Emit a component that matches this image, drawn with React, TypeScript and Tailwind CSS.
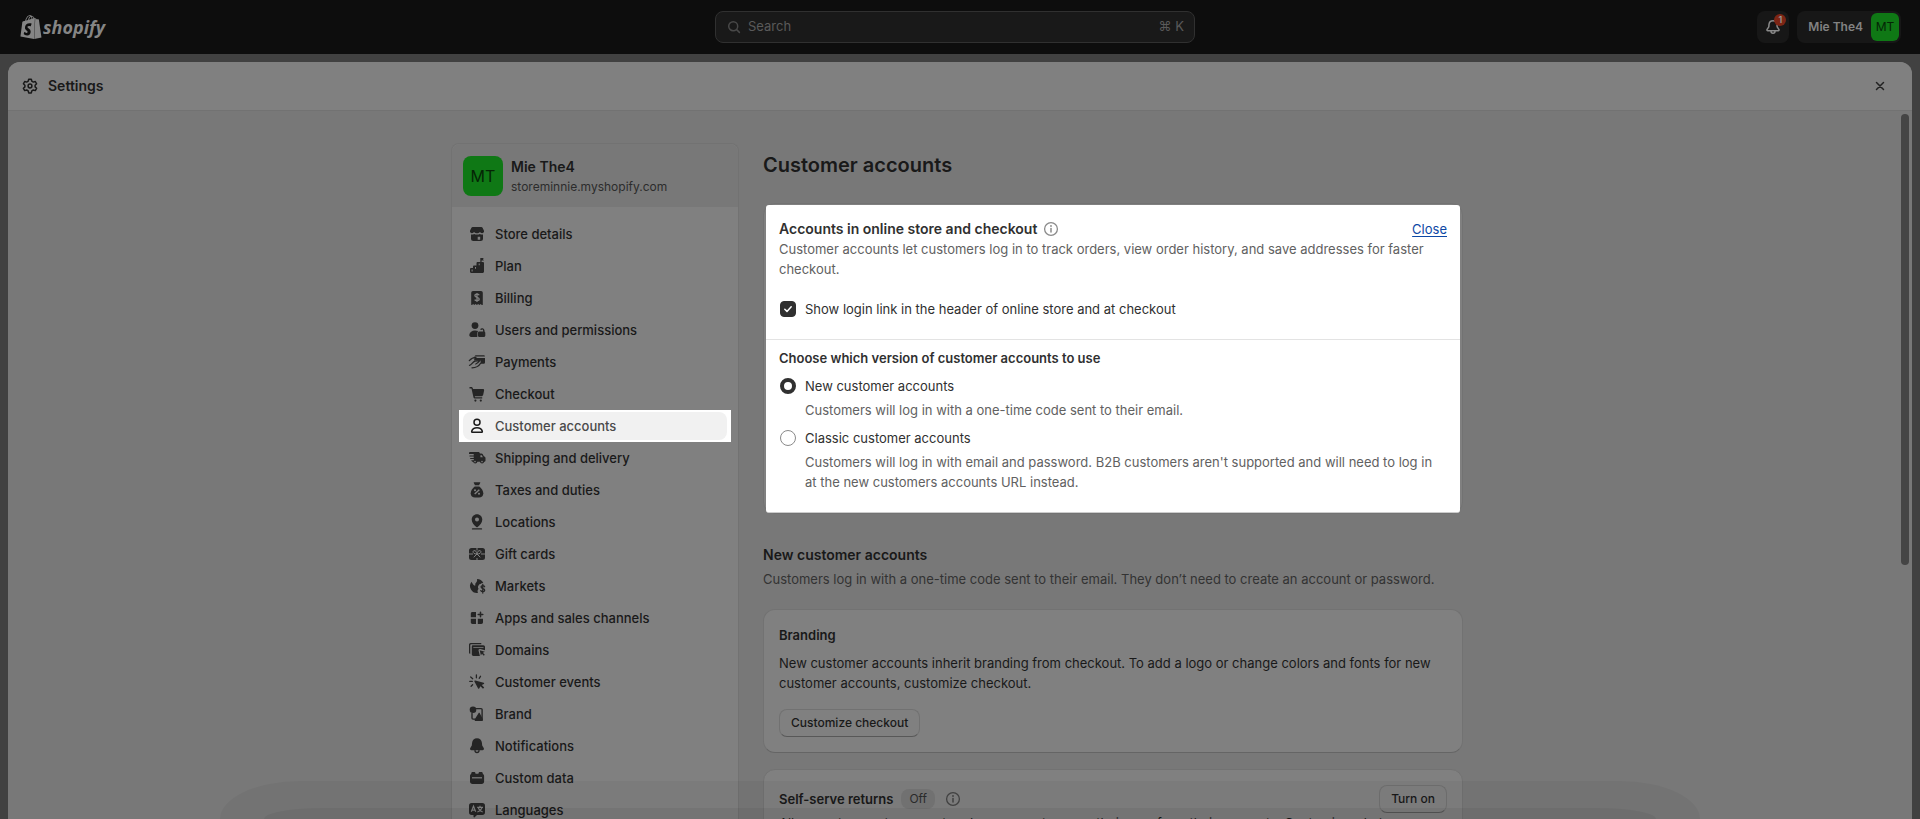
import React from "react";
import { SiShopify } from "react-icons/si";

type IconProps = { children: React.ReactNode; className?: string };

function Icon({ children, className = "size-5 shrink-0" }: IconProps) {
  return (
    <svg viewBox="0 0 20 20" className={className} fill="currentColor" fillRule="evenodd" aria-hidden="true">
      {children}
    </svg>
  );
}

const line = {
  fill: "none",
  stroke: "currentColor",
  strokeWidth: 1.5,
  strokeLinecap: "round" as const,
  strokeLinejoin: "round" as const,
};

const icons = {
  store: (
    <Icon>
      <path d="M5.8 3h8.400c.7 0 1.200.3 1.500.9l1.200 2.600c.6 1.400-.4 2.700-1.900 2.700-.9 0-1.600-.4-2.100-1.100-.4.700-1.100 1.100-2 1.100h-1.800c-.9 0-1.600-.4-2-1.100-.5.700-1.200 1.100-2.100 1.100-1.500 0-2.500-1.300-1.900-2.700l1.200-2.600C4.600 3.300 5.100 3 5.800 3Z" />
      <path d="M4 10.500c1.200.3 2.200 0 3.100-.6.800.5 1.800.7 2.900.7s2.100-.2 2.900-.7c.9.6 1.900.9 3.100.6v4A2.500 2.500 0 0 1 13.500 17h-7A2.500 2.500 0 0 1 4 14.500v-4Zm6.700 2.300v3h2.500v-3h-2.500Z" />
    </Icon>
  ),
  plan: (
    <Icon>
      <path d="M13.300 1.900h3.600l-1 1.200 1 1.300h-2.300V6h1.200c.7 0 1.200.5 1.200 1.200v8.300c0 .8-.7 1.500-1.500 1.500H4.200C3.500 17 3 16.500 3 15.800v-2.600c0-.7.500-1.200 1.200-1.200H6v-1.300c0-.7.500-1.200 1.200-1.200H9.500V7.200c0-.7.5-1.200 1.200-1.200h2.600V1.900ZM4.600 13.500v2h1v-2h-1Zm3.400-2.600v1.800h1v-1.800H8Zm3.700-3.500v1.900h1V7.400h-1Z" />
    </Icon>
  ),
  billing: (
    <Icon>
      <path d="M6 3h8a1.800 1.800 0 0 1 1.800 1.800v11.700c0 .5-.6.700-1 .4l-1.100-1-1.300 1.100-1.300-1.100L9.900 17l-1.300-1.100L7.300 17l-1.200-1.100-1 1c-.3.300-.9.100-.9-.4V4.800A1.800 1.800 0 0 1 6 3Z" />
      <path d="M12.200 7.200c-.4-.7-1.200-1-2.200-1-1.200 0-2.100.6-2.100 1.600 0 2.200 4.300 1.100 4.300 3.300 0 1-.9 1.600-2.200 1.600-1.100 0-1.900-.4-2.300-1.100M10 5v9" fill="none" stroke="#808080" strokeWidth="1.300" />
    </Icon>
  ),
  users: (
    <Icon>
      <circle cx="8" cy="5.600" r="3.400" />
      <path d="M2.300 14.800C2.700 12 5 10.400 8 10.400c1.200 0 2.300.2 3.200.7-.6.600-.9 1.300-.9 2.100V17H4.200c-1.200 0-2.100-1-1.900-2.200Z" />
      <path d="M12.400 11.500h3.700V10.400a.9.9 0 0 0-1.700-.3l-1.300-.5a2.300 2.300 0 0 1 4.400.8v1.200c.5.300.8.8.8 1.400v2.500c0 .8-.7 1.500-1.500 1.500h-4.400c-.8 0-1.500-.7-1.500-1.500V13c0-.8.700-1.500 1.500-1.500Z" />
    </Icon>
  ),
  payments: (
    <Icon>
      <path d="M8.600 3.300h8c.8 0 1.300.4 1.300 1.100H7.100l1.500-1.100Z" />
      <path d="M7.500 5.900H18v4.300c0 .9-.7 1.600-1.600 1.600h-2.600l-.3-3.200H7l.5-2.700Z" />
      <path d="M2.300 8.600C4.300 6.200 6 5.400 9 5.300M2.500 13.300c2-.1 3-3.300 5.500-4.200 1.500-.4 3.300-.5 4.800-.5-1.600 2-2.300 2.800-4 3.400M5 15.800c3.800 0 6.600-1 8.600-4.500" {...line} strokeWidth={1.300} />
    </Icon>
  ),
  checkout: (
    <Icon>
      <path d="M2.500 3.100h1.700c.9 0 1.500.6 1.700 1.400l.1.500h10c.8 0 1.300.7 1.100 1.400l-.9 4.300c-.2.900-.9 1.500-1.800 1.500H7.800l.2 1h7.200v1.400H7.700c-.6 0-1-.4-1.200-1L4.600 4.900c0-.3-.2-.4-.5-.4H2.500V3.100Z" />
      <circle cx="8.400" cy="16.600" r="1.100" />
      <circle cx="13.800" cy="16.600" r="1.100" />
    </Icon>
  ),
  person: (
    <Icon>
      <g {...line}>
        <circle cx="10" cy="6.200" r="3" />
        <path d="M4.700 15.300c.6-2.200 2.700-3.600 5.300-3.600s4.700 1.400 5.300 3.600c.1.500-.2.900-.7.900H5.400c-.5 0-.8-.4-.7-.9Z" />
      </g>
    </Icon>
  ),
  shipping: (
    <Icon>
      <path d="M4.500 4h6.800c.9 0 1.600.7 1.600 1.500h1.500c.6 0 1.100.3 1.400.8l.9 1.700 1 .7c.5.300.8.8.8 1.400v2.400c0 .8-.6 1.300-1.300 1.300a2.200 2.200 0 0 1-4.300 0h-2.500a2.200 2.200 0 0 1-4.300 0c-1.100 0-1.800-.7-1.800-1.500h2.500v-1.200H3.200V9.900h3.500V8.600H2.500V7.400h4.200V6.100H2V5.200C2 4.500 2.500 4 3.200 4h1.300Zm8.900 3.200v2h2.400l-.8-1.600c-.1-.2-.4-.4-.6-.4h-1Z" />
      <circle cx="8" cy="13.600" r=".8" fill="#808080" />
      <circle cx="15" cy="13.600" r=".8" fill="#808080" />
    </Icon>
  ),
  taxes: (
    <Icon>
      <path d="M7.300 2.200h5.400c.5 0 .8.500.5.900L12 5.300H8L6.800 3.100c-.3-.4 0-.9.500-.9Z" />
      <path d="M7.700 6.400h4.600c2.200 1.600 4 4.300 4 6.900 0 2.900-1.900 4.200-4.300 4.200H8c-2.400 0-4.300-1.300-4.300-4.200 0-2.600 1.800-5.300 4-6.900Z" />
      <path d="m7.700 14.100 4.600-4.400" stroke="#808080" strokeWidth="1.400" />
      <circle cx="8" cy="10.200" r="1" fill="#808080" />
      <circle cx="12" cy="13.700" r="1" fill="#808080" />
    </Icon>
  ),
  locations: (
    <Icon>
      <path d="M10 2.200c3 0 5.300 2.300 5.300 5.200 0 3.300-2.300 5.800-4.600 7.500-.4.300-1 .3-1.400 0C7 13.200 4.700 10.700 4.700 7.400 4.700 4.500 7 2.200 10 2.200Zm0 3.300a2 2 0 1 0 0 4 2 2 0 0 0 0-4Z" />
      <path d="M5.500 16.900h9" {...line} strokeWidth={1.300} />
    </Icon>
  ),
  gift: (
    <Icon>
      <path d="M4.500 4h11A2.500 2.500 0 0 1 18 6.500v7a2.500 2.500 0 0 1-2.500 2.500h-11A2.500 2.500 0 0 1 2 13.500v-7A2.500 2.500 0 0 1 4.500 4Z" />
      <g fill="none" stroke="#808080" strokeWidth="1">
        <path d="M2 10h4M14 10h4M10 4v2.500M10 14v2M10 10l-3.300 3.300M10 10l3.300 3.300" />
        <path d="M10 10C6.500 10.300 5 7.500 6.800 6.700 8.400 6.100 9.700 7.700 10 10ZM10 10c3.500.3 5-2.500 3.200-3.300C11.600 6.100 10.300 7.700 10 10Z" />
      </g>
    </Icon>
  ),
  markets: (
    <Icon>
      <path d="M10 3a7 7 0 0 1 6.300 4c-1.200-.1-2.100.3-2.800 1.100-.8 0-1.300.5-1.800 1.100-.8 1-1 2.300-.3 3.400.3.500-.4 1-.7 1.600-.3.700-.1 1.700.3 2.700A7 7 0 0 1 4.500 5.700L6 8.300c.3.600 1 .9 1.500 1.300.5.300.9-.3.800-.9-.2-1 .2-1.700.9-2.300.8-.7 1.100-2.100.8-3.400Z" />
      <path d="M17.600 10.700c-.4-.7-1-1-1.800-1-1 0-1.700.6-1.700 1.400 0 2.100 3.600 1 3.600 3.100 0 .9-.8 1.500-1.900 1.500-.9 0-1.600-.4-2-1.100M15.800 8.500v8.500" {...line} strokeWidth={1.300} />
    </Icon>
  ),
  apps: (
    <Icon>
      <path d="M5.500 4H9v5.200H3.800V5.700C3.800 4.700 4.500 4 5.500 4ZM3.800 10.800H9V16H5.500c-1 0-1.700-.7-1.700-1.700v-3.500ZM10.800 10.800H16v3.500c0 1-.7 1.700-1.700 1.700h-3.500v-5.200Z" />
      <path d="M13.500 4.200v4.600M11.200 6.500h4.600" {...line} />
    </Icon>
  ),
  domains: (
    <Icon>
      <path d="M2 4.700C2 3.800 2.700 3 3.700 3h10.600v1.300H4c-.4 0-.7.3-.7.7v8.700C2.500 13.700 2 13.100 2 12.400V4.700Z" />
      <path d="M6 5.300h10.300c1 0 1.700.7 1.700 1.700v3.300l-4.900-1.200c-1-.2-1.800.6-1.500 1.600l1.300 5.300H6.500c-1 0-1.700-.7-1.700-1.700V6.500c0-.7.500-1.200 1.200-1.200Zm.3 1.900v.9h10.200v-.9H6.300Z" />
      <path d="m12.700 10.300 5.200 1.500-2 1 1.900 2-1 1-1.900-2-1 1.700-1.200-5.200Z" />
    </Icon>
  ),
  events: (
    <Icon>
      <path d="m8.300 8.500 8.400 2.300c.6.200.7.900.1 1.200l-2 1 2.400 2.600-1.200 1.200-2.500-2.500-1.300 2.100c-.3.500-1 .4-1.200-.2L7.400 9.400c-.2-.5.300-1 .9-.9Z" />
      <path d="M9.400 3v2.800M13.500 4.300l-1.300 2M3.700 5l2 1.700M2.800 9.400h2.500M5.600 12.700l-1.500 1.500" {...line} strokeWidth={1.300} />
    </Icon>
  ),
  brand: (
    <Icon>
      <circle cx="6" cy="5.700" r="3.300" />
      <path d="M9.500 4.600h4.600c.6 0 1 .4 1 1v9.200M5 9.500v4.600c0 .6.400 1 1 1h2" {...line} strokeWidth={1.400} />
      <path d="M11.500 9.200c.3-.5 1-.5 1.300 0l3.100 6c.4.800-.1 1.800-1 1.800H8.800c-1 0-1.500-1-1-1.800l3.700-6Z" />
    </Icon>
  ),
  notifications: (
    <Icon>
      <path d="M10 2.200c2.800 0 4.700 2 4.900 4.600l.3 2.800 1.500 2.400c.7 1.100 0 2.300-1.200 2.300h-11c-1.200 0-1.900-1.200-1.200-2.300l1.500-2.400.3-2.800C5.300 4.200 7.200 2.200 10 2.200Z" />
      <path d="M8 14.500c0 1.200.8 2 2 2s2-.8 2-2" {...line} strokeWidth={1.300} />
    </Icon>
  ),
  data: (
    <Icon>
      <path d="M5.600 4h1.500c.8 0 1.400.6 1.400 1.400v.3h3v-.3c0-.8.600-1.400 1.400-1.400h1.500c.8 0 1.400.6 1.400 1.400v.6c.8.300 1.300 1 1.300 2v5.500c0 1.500-1 2.500-2.500 2.500h-9C4 16 3 15 3 13.500V8c0-1 .4-1.700 1.200-2v-.6C4.200 4.600 4.800 4 5.600 4Z" />
      <path d="M5 9.800h10" stroke="#808080" strokeWidth="1.200" />
    </Icon>
  ),
  languages: (
    <Icon>
      <path d="M4.700 3h10.600A2.700 2.700 0 0 1 18 5.700v6.600a2.700 2.700 0 0 1-2.700 2.700H10l-2.400 2.200c-.4.400-1.100.1-1.100-.5V15H4.700A2.700 2.700 0 0 1 2 12.300V5.700A2.700 2.700 0 0 1 4.700 3Z" />
      <path d="m4.300 11.800 2.200-5.600 2.200 5.600M5 10.100h3M10.200 7.400h5.800M13 5.800v1.600M11.300 8c.7 2 2.200 3.300 4.400 4M14.900 8c-.7 2-2.200 3.300-4.500 4" fill="none" stroke="#808080" strokeWidth="1.200" />
    </Icon>
  ),
};

const navItems: { label: string; icon: keyof typeof icons; active?: boolean }[] = [
  { label: "Store details", icon: "store" },
  { label: "Plan", icon: "plan" },
  { label: "Billing", icon: "billing" },
  { label: "Users and permissions", icon: "users" },
  { label: "Payments", icon: "payments" },
  { label: "Checkout", icon: "checkout" },
  { label: "Customer accounts", icon: "person", active: true },
  { label: "Shipping and delivery", icon: "shipping" },
  { label: "Taxes and duties", icon: "taxes" },
  { label: "Locations", icon: "locations" },
  { label: "Gift cards", icon: "gift" },
  { label: "Markets", icon: "markets" },
  { label: "Apps and sales channels", icon: "apps" },
  { label: "Domains", icon: "domains" },
  { label: "Customer events", icon: "events" },
  { label: "Brand", icon: "brand" },
  { label: "Notifications", icon: "notifications" },
  { label: "Custom data", icon: "data" },
  { label: "Languages", icon: "languages" },
];

function InfoIcon() {
  return (
    <Icon>
      <circle cx="10" cy="10" r="6.400" fill="none" stroke="currentColor" strokeWidth="1.300" />
      <path d="M10 9.500V13" {...line} />
      <circle cx="10" cy="7" r=".9" />
    </Icon>
  );
}

function TopBar() {
  return (
    <header className="grid h-[54px] shrink-0 grid-cols-[1fr_480px_1fr] items-center bg-[#0d0d0d] pr-[19px] pl-[9px]">
      <a href="#home" className="flex items-center pl-[10px] text-[#858585]">
        <SiShopify className="size-6" aria-hidden="true" />
        <span className="font-['Open_Sans',sans-serif] text-[18px] leading-6 font-bold italic">shopify</span>
      </a>
      <div className="flex h-8 items-center gap-1 rounded-lg border border-[#303030] bg-[#191919] pr-2.5 pl-2 text-[#5a5a5a]">
        <Icon className="size-5 shrink-0 text-[#484848]">
          <circle cx="9.200" cy="9.200" r="4.500" {...line} />
          <path d="m12.600 12.600 2.800 2.800" {...line} />
        </Icon>
        <input
          type="text"
          aria-label="Search"
          placeholder="Search"
          className="min-w-0 flex-1 bg-transparent text-[13px] outline-none placeholder:text-[#5a5a5a]"
        />
        <kbd className="font-['Inter','DejaVu_Sans',sans-serif] text-[13px]">⌘ K</kbd>
      </div>
      <div className="flex items-center justify-end gap-2">
        <button type="button" aria-label="Notifications" className="relative flex size-8 items-center justify-center rounded-lg bg-[#171717] text-[#8a8a8a]">
          <Icon>
            <path d="M10 3.700c2.200 0 3.800 1.600 4 3.700l.2 2.500 1.700 2.500c.4.600 0 1.300-.7 1.300H4.800c-.7 0-1.100-.7-.7-1.300l1.700-2.500.2-2.500c.2-2.100 1.800-3.700 4-3.700Z" {...line} />
            <path d="M8 14.200c0 1.200.8 2 2 2s2-.8 2-2" {...line} />
          </Icon>
          <span className="absolute top-[3px] right-[3px] flex size-3 items-center justify-center rounded-full bg-[#7d2514] text-[9px] font-semibold text-[#999999]">1</span>
        </button>
        <button type="button" className="flex h-8 items-center gap-2 rounded-lg bg-[#171717] pr-0.5 pl-[11px] text-[12px] font-semibold text-[#828282]">
          Mie The4
          <span className="flex size-7 items-center justify-center rounded-md bg-[#0f7815] font-normal text-[#052505]">MT</span>
        </button>
      </div>
    </header>
  );
}

function Sidebar() {
  return (
    <aside className="w-72 shrink-0 rounded-t-lg border border-b-0 border-[#727272] bg-[#808080]">
      <div className="flex h-[63px] items-center gap-2 rounded-t-lg bg-[#787878] px-[11px]">
        <span className="flex size-10 shrink-0 items-center justify-center rounded-lg bg-[#0f7815] text-[16px] text-[#052505]">MT</span>
        <div className="min-w-0 pt-0.5">
          <p className="text-[14px] leading-5 font-semibold">Mie The4</p>
          <p className="text-[12px] leading-5 text-[#2c2c2c]">storeminnie.myshopify.com</p>
        </div>
      </div>
      <nav aria-label="Settings sections">
        <ul className="px-[7px] py-[11px]">
          {navItems.map((item) => (
            <li key={item.label} className={item.active ? "bg-white px-1 py-0.5" : "px-1 py-0.5"}>
              <a
                href={"#" + item.icon}
                aria-current={item.active ? "page" : undefined}
                className={
                  item.active
                    ? "flex items-center gap-2 rounded-lg bg-[#f1f1f1] p-1 text-[13px] leading-5 font-medium text-[#4a4a4a]"
                    : "flex items-center gap-2 rounded-lg p-1 text-[13px] leading-5 font-medium text-[#191919]"
                }
              >
                <span className={item.active ? "text-[#1a1a1a]" : "text-[#252525]"}>{icons[item.icon]}</span>
                {item.label}
              </a>
            </li>
          ))}
        </ul>
      </nav>
    </aside>
  );
}

function VersionOption({ id, label, hint, checked }: { id: string; label: string; hint: string; checked?: boolean }) {
  return (
    <div className="grid grid-cols-[18px_1fr] gap-x-2 gap-y-1">
      <input
        type="radio"
        name="accounts-version"
        id={id}
        defaultChecked={checked}
        aria-describedby={id + "-hint"}
        className="mt-0.5 ml-px size-4 appearance-none rounded-full border border-[#8a8a8a] bg-white checked:border-4 checked:border-[#303030]"
      />
      <label htmlFor={id} className="text-[#303030]">{label}</label>
      <p id={id + "-hint"} className="col-start-2 text-[#616161]">{hint}</p>
    </div>
  );
}

function AccountsCard() {
  return (
    <section className="mt-[26px] rounded-xl border border-[#727272] bg-[#808080] p-0.5 pt-px pb-0">
      <div className="rounded-[3px] border-b border-[#cccccc] bg-white">
        <div className="border-b border-[#e3e3e3] px-[13px] pt-3.5 pb-5">
          <div className="flex items-center justify-between">
            <h2 className="flex items-center gap-1 text-[14px] leading-5 font-semibold text-[#303030]">
              Accounts in online store and checkout
              <span className="text-[#8a8a8a]"><InfoIcon /></span>
            </h2>
            <button type="button" className="text-[#0d48a5] underline underline-offset-2">Close</button>
          </div>
          <p className="text-[#616161]">
            Customer accounts let customers log in to track orders, view order history, and save addresses for faster checkout.
          </p>
          <div className="mt-5 flex items-center gap-2">
            <span className="grid w-[18px] place-items-center">
              <input
                type="checkbox"
                id="show-login"
                defaultChecked
                className="peer col-start-1 row-start-1 size-4 appearance-none rounded-sm border border-[#8a8a8a] checked:border-[#303030] checked:bg-[#303030]"
              />
              <svg viewBox="0 0 16 16" aria-hidden="true" className="pointer-events-none col-start-1 row-start-1 hidden size-4 text-white peer-checked:block">
                <path d="m4.800 8.300 2.200 2.100 4.200-4.700" {...line} />
              </svg>
            </span>
            <label htmlFor="show-login" className="text-[#303030]">Show login link in the header of online store and at checkout</label>
          </div>
        </div>
        <fieldset className="px-[13px] pt-2 pb-5">
          <legend className="float-left mb-2 w-full font-semibold text-[#303030]">Choose which version of customer accounts to use</legend>
          <div className="clear-both flex flex-col gap-2">
            <VersionOption id="version-new" label="New customer accounts" hint="Customers will log in with a one-time code sent to their email." checked />
            <VersionOption
              id="version-classic"
              label="Classic customer accounts"
              hint="Customers will log in with email and password. B2B customers aren't supported and will need to log in at the new customers accounts URL instead."
            />
          </div>
        </fieldset>
      </div>
    </section>
  );
}

function Main() {
  return (
    <main className="w-[700px] min-w-0 text-[13px] leading-5">
      <h1 className="mt-2.5 text-[20px] leading-6 font-semibold">Customer accounts</h1>
      <AccountsCard />
      <h2 className="mt-[31px] text-[14px] leading-5 font-semibold">New customer accounts</h2>
      <p className="mt-1 text-[#333333]">
        Customers log in with a one-time code sent to their email. They don’t need to create an account or password.
      </p>
      <section className="mt-5 rounded-xl border border-[#727272] border-b-[#656565] bg-[#808080] p-[15px]">
        <h3 className="font-semibold">Branding</h3>
        <p className="mt-2">
          New customer accounts inherit branding from checkout. To add a logo or change colors and fonts for new customer accounts, customize checkout.
        </p>
        <button type="button" className="mt-4 flex h-7 items-center rounded-lg border border-[#717171] border-b-[#585858] px-[11px] text-[12px] font-medium">
          Customize checkout
        </button>
      </section>
      <section className="mt-4 rounded-xl border border-[#727272] bg-[#808080] p-[15px]">
        <div className="flex h-7 items-center">
          <h3 className="font-semibold">Self-serve returns</h3>
          <span className="ml-2 rounded-lg bg-[#767676] px-2 text-[12px] text-[#2c2c2c]">Off</span>
          <span className="ml-2 text-[#444444]"><InfoIcon /></span>
          <button type="button" className="ml-auto flex h-7 items-center rounded-lg border border-[#717171] border-b-[#585858] px-[11px] text-[12px] font-medium">
            Turn on
          </button>
        </div>
        <p>Allow customers to request and manage returns on their own from their accounts. Customize what</p>
      </section>
    </main>
  );
}

export default function App() {
  return (
    <div className="relative flex h-screen flex-col overflow-hidden bg-[#414141] font-['Inter',sans-serif] text-[#191919]">
      <TopBar />
      <div className="mx-2 mt-2 flex min-h-0 flex-1 flex-col overflow-hidden rounded-t-xl bg-[#787878]">
        <div className="flex h-[49px] shrink-0 items-center gap-2 border-b border-[#727272] bg-[#808080] pr-[22px] pl-3">
          <Icon>
            <path d="M8.700 3.200h2.600l.5 2 1.500.9 2-.6 1.300 2.300-1.500 1.400v1.700l1.500 1.400-1.300 2.300-2-.6-1.500.9-.5 2H8.700l-.5-2-1.500-.9-2 .6-1.300-2.300 1.500-1.400V9.200L3.400 7.800l1.300-2.300 2 .6 1.500-.9.500-2Z" {...line} />
            <circle cx="10" cy="10" r="1.900" {...line} />
          </Icon>
          <h2 className="text-[14px] leading-5 font-semibold">Settings</h2>
          <button type="button" aria-label="Close settings" className="ml-auto text-[#222222]">
            <Icon>
              <path d="m6.500 6.500 7 7M13.500 6.500l-7 7" {...line} />
            </Icon>
          </button>
        </div>
        <div className="flex min-h-0 flex-1 overflow-hidden">
          <div className="flex min-w-0 flex-1 justify-center gap-6 pt-8 pl-[5px]">
            <Sidebar />
            <Main />
          </div>
          <div className="w-[11px] shrink-0 pt-[3px] pr-[3px]" aria-hidden="true">
            <div className="h-[64%] rounded-full bg-[#454545]" />
          </div>
        </div>
      </div>
      <div className="pointer-events-none absolute inset-x-[220px] bottom-0 h-[38px] overflow-hidden bg-black/4 pt-[27px] [border-radius:80px_80px_0_0/38px_38px_0_0]" aria-hidden="true">
        <div className="mx-11 h-full bg-black/5 [border-radius:60px_60px_0_0/11px_11px_0_0]" />
      </div>
    </div>
  );
}
